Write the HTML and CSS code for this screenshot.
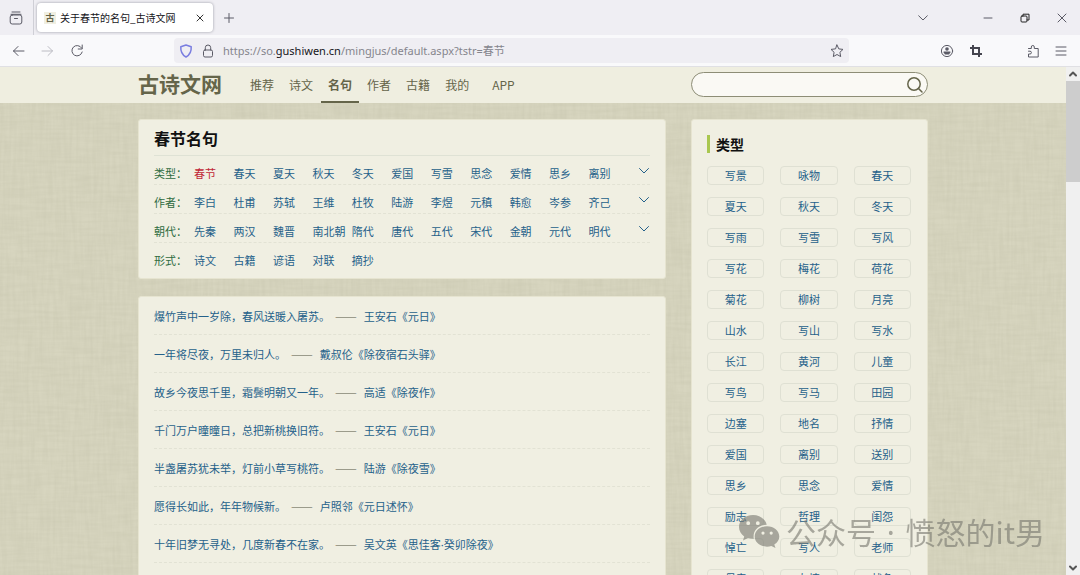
FILE: index.html
```html
<!DOCTYPE html>
<html lang="zh-CN">
<head>
<meta charset="utf-8">
<title>关于春节的名句_古诗文网</title>
<link rel="stylesheet" href="styles.css">
</head>
<body>
<div class="tabbar">
  <button class="icon-btn view-btn" aria-label="标签页"><svg width="14" height="14" viewBox="0 0 14 14"><path d="M3 1h8M2 3.300h10"/><rect x="1.200" y="4" width="11.600" height="9" rx="2"/><path d="M5.500 7.500h3"/></svg></button>
  <div class="tab">
    <span class="favicon">古</span>
    <span class="tab-title">关于春节的名句_古诗文网</span>
    <button class="icon-btn" aria-label="关闭标签页"><svg width="8" height="8" viewBox="0 0 8 8"><path d="M1 1l6 6M7 1l-6 6"/></svg></button>
  </div>
  <button class="icon-btn new-tab" aria-label="新建标签页"><svg width="10" height="10" viewBox="0 0 10 10"><path d="M5 .5v9M.5 5h9"/></svg></button>
  <div class="window-controls">
    <button class="icon-btn list-tabs" aria-label="列出标签页"><svg width="10" height="6" viewBox="0 0 10 6"><path d="M.7 .8L5 5 9.300 .8"/></svg></button>
    <button class="icon-btn" aria-label="最小化"><svg width="10" height="10" viewBox="0 0 10 10"><path d="M1 5h8"/></svg></button>
    <button class="icon-btn dark" aria-label="还原"><svg width="10" height="10" viewBox="0 0 10 10"><rect x="1" y="3" width="6" height="6" rx="1"/><path d="M3 3V1.200h6V7H7"/></svg></button>
    <button class="icon-btn" aria-label="关闭"><svg width="10" height="10" viewBox="0 0 10 10"><path d="M1 1l8 8M9 1L1 9"/></svg></button>
  </div>
</div>
<div class="toolbar">
  <button class="icon-btn" aria-label="后退"><svg width="13" height="12" viewBox="0 0 13 12"><path d="M6 1.500L1.500 6 6 10.500M1.500 6H12"/></svg></button>
  <button class="icon-btn faded" aria-label="前进"><svg width="13" height="12" viewBox="0 0 13 12"><path d="M7 1.500L11.500 6 7 10.500M11.500 6H1"/></svg></button>
  <button class="icon-btn" aria-label="刷新"><svg width="14" height="14" viewBox="0 0 14 14"><path d="M11.600 4A5.200 5.200 0 1 0 12.200 8M12.200 1v4H8.200"/></svg></button>
  <div class="address">
    <svg class="shield" width="14" height="14" viewBox="0 0 14 14"><path d="M7 1l5.200 1.800c.3 4.700-1 8-5.200 10.200C2.800 10.800 1.500 7.500 1.800 2.800z"/></svg>
    <svg class="lock" width="12" height="14" viewBox="0 0 12 14"><rect x="1.500" y="6" width="9" height="7" rx="1.500"/><path d="M3.300 6V3.700a2.700 2.700 0 0 1 5.400 0V6"/></svg>
    <span class="url">https://so.<b>gushiwen.cn</b>/mingjus/default.aspx?tstr=春节</span>
    <button class="icon-btn" aria-label="添加书签"><svg width="14" height="14" viewBox="0 0 14 14"><path d="M7 1l1.800 3.900 4.200.5-3.100 2.900.8 4.300L7 10.500l-3.700 2.100.8-4.300L1 5.400l4.200-.5z"/></svg></button>
  </div>
  <div class="tools">
    <button class="icon-btn" aria-label="账户"><svg width="14" height="14" viewBox="0 0 14 14"><circle cx="7" cy="7" r="5.600"/><circle class="solid" cx="7" cy="5" r="1.800"/><path class="solid" d="M3.600 7.600h6.800v1L9 10.400H5L3.600 8.600z"/></svg></button>
    <button class="icon-btn crop" aria-label="截图"><svg width="14" height="14" viewBox="0 0 14 14"><path d="M4 1v9h9M1 4h9v9"/></svg></button>
    <button class="icon-btn ext" aria-label="扩展"><svg width="14" height="14" viewBox="0 0 14 14"><path d="M2.500 4.500h2.800V3a1.500 1.500 0 0 1 3 0v1.500h3.900v8.500H2.500V10H4a1.300 1.300 0 0 0 0-2.800H2.500"/></svg></button>
    <button class="icon-btn" aria-label="菜单"><svg width="12" height="12" viewBox="0 0 12 12"><path d="M1 2h10M1 6h10M1 10h10"/></svg></button>
  </div>
</div>
<div class="viewport">
  <div class="page">
    <svg class="linen" aria-hidden="true">
      <filter id="warp" x="0" y="0" width="100%" height="100%"><feTurbulence type="fractalNoise" baseFrequency=".3 .03" numOctaves="2" seed="3"/><feColorMatrix values="0 0 0 0 .52  0 0 0 0 .51  0 0 0 0 .38  .4 0 0 0 -.12"/></filter>
      <filter id="weft" x="0" y="0" width="100%" height="100%"><feTurbulence type="fractalNoise" baseFrequency=".03 .3" numOctaves="2" seed="8"/><feColorMatrix values="0 0 0 0 .52  0 0 0 0 .51  0 0 0 0 .38  .4 0 0 0 -.12"/></filter>
      <rect width="100%" height="100%" filter="url(#warp)"/><rect width="100%" height="100%" filter="url(#weft)"/>
    </svg>
    <header class="site-header">
      <div class="container header-row">
        <a class="logo" href="#">古诗文网</a>
        <nav class="nav">
          <a href="#">推荐</a><a href="#">诗文</a><a class="current" href="#">名句</a><a href="#">作者</a><a href="#">古籍</a><a href="#">我的</a><a class="app" href="#">APP</a>
        </nav>
        <form class="search">
          <input type="text" aria-label="搜索">
          <button type="button" aria-label="搜索"><svg width="18" height="18" viewBox="0 0 18 18"><circle cx="8" cy="8" r="6.200"/><path d="M12.500 12.500L16 16"/></svg></button>
        </form>
      </div>
    </header>
    <div class="container columns">
      <main class="main">
        <section class="card filters">
          <h1>春节名句</h1>
          <div class="filter"><span class="label">类型：</span><a class="on" href="#">春节</a><a href="#">春天</a><a href="#">夏天</a><a href="#">秋天</a><a href="#">冬天</a><a href="#">爱国</a><a href="#">写雪</a><a href="#">思念</a><a href="#">爱情</a><a href="#">思乡</a><a href="#">离别</a><button aria-label="展开类型"><svg width="12" height="8" viewBox="0 0 12 8"><path d="M1.500 1.500L6 6l4.500-4.500"/></svg></button></div>
          <div class="filter"><span class="label">作者：</span><a href="#">李白</a><a href="#">杜甫</a><a href="#">苏轼</a><a href="#">王维</a><a href="#">杜牧</a><a href="#">陆游</a><a href="#">李煜</a><a href="#">元稹</a><a href="#">韩愈</a><a href="#">岑参</a><a href="#">齐己</a><button aria-label="展开作者"><svg width="12" height="8" viewBox="0 0 12 8"><path d="M1.500 1.500L6 6l4.500-4.500"/></svg></button></div>
          <div class="filter"><span class="label">朝代：</span><a href="#">先秦</a><a href="#">两汉</a><a href="#">魏晋</a><a href="#">南北朝</a><a href="#">隋代</a><a href="#">唐代</a><a href="#">五代</a><a href="#">宋代</a><a href="#">金朝</a><a href="#">元代</a><a href="#">明代</a><button aria-label="展开朝代"><svg width="12" height="8" viewBox="0 0 12 8"><path d="M1.500 1.500L6 6l4.500-4.500"/></svg></button></div>
          <div class="filter"><span class="label">形式：</span><a href="#">诗文</a><a href="#">古籍</a><a href="#">谚语</a><a href="#">对联</a><a href="#">摘抄</a></div>
        </section>
        <section class="card quotes">
          <p><a href="#">爆竹声中一岁除，春风送暖入屠苏。</a><span class="dash">——</span><a href="#">王安石《元日》</a></p>
          <p><a href="#">一年将尽夜，万里未归人。</a><span class="dash">——</span><a href="#">戴叔伦《除夜宿石头驿》</a></p>
          <p><a href="#">故乡今夜思千里，霜鬓明朝又一年。</a><span class="dash">——</span><a href="#">高适《除夜作》</a></p>
          <p><a href="#">千门万户曈曈日，总把新桃换旧符。</a><span class="dash">——</span><a href="#">王安石《元日》</a></p>
          <p><a href="#">半盏屠苏犹未举，灯前小草写桃符。</a><span class="dash">——</span><a href="#">陆游《除夜雪》</a></p>
          <p><a href="#">愿得长如此，年年物候新。</a><span class="dash">——</span><a href="#">卢照邻《元日述怀》</a></p>
          <p><a href="#">十年旧梦无寻处，几度新春不在家。</a><span class="dash">——</span><a href="#">吴文英《思佳客<span class="dot">·</span>癸卯除夜》</a></p>
          <p></p>
        </section>
      </main>
      <aside class="card sidebar">
        <h2>类型</h2>
        <div class="tags">
          <a href="#">写景</a><a href="#">咏物</a><a href="#">春天</a>
          <a href="#">夏天</a><a href="#">秋天</a><a href="#">冬天</a>
          <a href="#">写雨</a><a href="#">写雪</a><a href="#">写风</a>
          <a href="#">写花</a><a href="#">梅花</a><a href="#">荷花</a>
          <a href="#">菊花</a><a href="#">柳树</a><a href="#">月亮</a>
          <a href="#">山水</a><a href="#">写山</a><a href="#">写水</a>
          <a href="#">长江</a><a href="#">黄河</a><a href="#">儿童</a>
          <a href="#">写鸟</a><a href="#">写马</a><a href="#">田园</a>
          <a href="#">边塞</a><a href="#">地名</a><a href="#">抒情</a>
          <a href="#">爱国</a><a href="#">离别</a><a href="#">送别</a>
          <a href="#">思乡</a><a href="#">思念</a><a href="#">爱情</a>
          <a href="#">励志</a><a href="#">哲理</a><a href="#">闺怨</a>
          <a href="#">悼亡</a><a href="#">写人</a><a href="#">老师</a>
          <a href="#">母亲</a><a href="#">友情</a><a href="#">战争</a>
        </div>
      </aside>
    </div>
  </div>
  <div class="scrollbar">
    <svg width="8" height="6" viewBox="0 0 8 6"><path d="M1 4.500l3-3 3 3"/></svg>
    <div class="thumb"></div>
    <svg width="8" height="6" viewBox="0 0 8 6"><path d="M1 1.500l3 3 3-3"/></svg>
  </div>
  <div class="watermark">
    <svg width="42" height="34" viewBox="0 0 42 34"><path fill-rule="evenodd" d="M15 1C7 1 1 6.200 1 13c0 3.900 2 7.200 5.200 9.400L5 26.500l5-2.600c1.800.6 3.800.9 5.800.8C14.400 17 20 11 28.700 10.700 27.300 5 21.700 1 15 1zM10.200 7.300a1.900 1.900 0 1 1 0 3.800 1.900 1.900 0 0 1 0-3.800zm9.600 0a1.900 1.900 0 1 1 0 3.800 1.900 1.900 0 0 1 0-3.800z"/><path fill-rule="evenodd" d="M29 12.300c-7 0-12.300 4.500-12.300 10.200S22 32.700 29 32.700c1.500 0 3-.2 4.300-.7l4.200 2-1.200-3.400c3-1.900 5-4.800 5-8.100 0-5.700-5.300-10.200-12.300-10.200zM25 17.500a1.600 1.600 0 1 1 0 3.200 1.600 1.600 0 0 1 0-3.200zm8.200 0a1.600 1.600 0 1 1 0 3.200 1.600 1.600 0 0 1 0-3.200z"/></svg>
    <span>公众号 <span class="dot">·</span> 愤怒的it男</span>
  </div>
</div>
</body>
</html>
```
FILE: styles.css
```css
* { box-sizing: border-box; }
body {
  margin: 0;
  height: 100vh;
  display: flex;
  flex-direction: column;
  overflow: hidden;
  font: 11px/16px "Noto Sans CJK SC", "Noto Sans", sans-serif;
  color: #222;
}
a { color: #25618a; text-decoration: none; }
button { padding: 0; border: 0; background: none; color: inherit; }
svg { display: block; fill: none; stroke: currentColor; stroke-linecap: round; stroke-linejoin: round; }
.solid { fill: currentColor; stroke: none; }
.dot { font-family: "Noto Sans", sans-serif; line-height: 1; }

.tabbar { flex: none; height: 35px; display: flex; align-items: center; background: #efeef3; color: #5b5b66; }
.icon-btn { flex: none; display: flex; align-items: center; justify-content: center; }
.view-btn { width: 34px; height: 100%; padding-right: 2px; border-right: 1px solid #cfcfd6; }
.tab { width: 176px; height: 29px; margin-left: 3px; padding: 0 9px 0 7px; display: flex; align-items: center; gap: 4px; border-radius: 4px; background: #fff; box-shadow: 0 0 3px #9a9aa4; color: #333; }
.favicon { width: 12px; height: 12px; font: 700 9px/12px "Noto Sans CJK SC", sans-serif; text-align: center; background: #f0efe2; color: #65654a; }
.tab-title { flex: 1; font-size: 10px; color: #15141a; white-space: nowrap; }
.new-tab { margin-left: 11px; }
.window-controls { margin-left: auto; padding-right: 13px; display: flex; align-items: center; gap: 27px; }
.list-tabs { margin-right: 28px; }
.dark { color: #222; }

.toolbar { flex: none; height: 32px; padding: 0 13px 0 12px; display: flex; align-items: center; gap: 16px; background: #f9f9fb; border-bottom: 1px solid #e0e0e4; color: #5b5b66; }
.faded { color: #bcbcc3; }
.address { flex: 1; height: 25px; margin-left: 74px; padding: 0 5px; display: flex; align-items: center; gap: 9px; border-radius: 4px; background: #efeef3; }
.shield { color: #7a7ee0; stroke-width: 1.500; }
.url { flex: 1; font: 11px/16px "Noto Sans", "Noto Sans CJK SC", sans-serif; color: #85858d; white-space: nowrap; }
.url b { font-weight: 400; color: #15141a; }
.tools { margin-left: 75px; display: flex; gap: 15px; }
.crop { color: #45454f; }
.crop svg { stroke-width: 2; stroke-linecap: butt; stroke-linejoin: miter; }
.ext { margin-left: 28px; }

.viewport { flex: 1; min-height: 0; display: flex; position: relative; }
.page { flex: 1; min-width: 0; overflow: hidden; position: relative; background: #d7d5bf; }
.linen { position: absolute; inset: 0; width: 100%; height: 100%; }
.container { width: 74.1%; max-width: 1000px; margin: 0 auto; }
.site-header { position: relative; height: 36px; background: #efeee0; }
.header-row { height: 100%; display: flex; align-items: center; }
.logo { padding-bottom: 4px; font-size: 21px; line-height: 32px; font-weight: 700; color: #65654a; }
.nav { align-self: stretch; margin-left: 21px; display: flex; gap: 1px; font-size: 12px; line-height: 35px; }
.nav a { padding: 0 7px; color: #65654a; }
.nav .current { font-weight: 700; border-bottom: 2px solid #65654a; }
.nav .app { margin-left: 8px; }
.search { width: 30%; height: 25px; margin-left: auto; margin-bottom: 1px; padding: 0 3px 0 12px; display: flex; align-items: center; border: 1px solid #8d8d76; border-radius: 13px; background: #faf9f4; color: #65654a; }
.search input { flex: 1; min-width: 0; border: 0; outline: 0; background: none; }
.search svg { stroke-width: 1.500; }

.columns { position: relative; padding-top: 16px; display: grid; grid-template-columns: minmax(0, 1fr) 30%; gap: 25px; align-items: start; }
.card { border-radius: 3px; border: 1px solid #e6e4d0; background: #f0efe2; }
.filters { padding: 3px 15px 6px; }
.filters h1 { margin: 0; padding-bottom: 2px; font-size: 16px; line-height: 30px; border-bottom: 1px solid #dfe2d5; color: #111; }
.filter { height: 29px; padding-top: 5px; display: grid; grid-template-columns: 40px repeat(11, minmax(0, 1fr)) 22px; align-items: center; border-bottom: 1px dashed #e2e2d4; white-space: nowrap; }
.filter:last-child { border-bottom: 0; }
.label { color: #2e6b3f; }
.filter .on { color: #c01f35; }
.filter button { justify-self: end; padding-bottom: 4px; color: #25618a; }
.quotes { margin-top: 17px; padding: 0 15px; }
.quotes p { height: 38px; margin: 0; display: flex; align-items: center; border-bottom: 1px dashed #e2e2d4; white-space: nowrap; }
.dash { margin: 0 7px 0 5px; font-size: 13px; color: #888878; }
.sidebar { padding: 15px 16px 15px 15px; }
.sidebar h2 { margin: 0 0 13px; padding-left: 6px; font-size: 14px; line-height: 18px; border-left: 3px solid #a9c74f; color: #111; }
.tags { display: grid; grid-template-columns: repeat(3, minmax(0, 1fr)); gap: 12px 16px; }
.tags a { height: 19px; line-height: 17px; text-align: center; border: 1px solid #dfe0d3; border-radius: 4px; }

.scrollbar { flex: none; width: 14px; padding: 4px 0; display: flex; flex-direction: column; align-items: center; background: #f0f0f0; color: #555; }
.scrollbar svg { flex: none; stroke-width: 2; }
.thumb { width: 100%; height: 101px; margin: 4px 0 auto; background: #cdcdcd; }
.watermark { position: absolute; right: 35px; bottom: 22px; display: flex; align-items: center; gap: 6px; color: #77776e; opacity: .6; font-size: 30px; line-height: 44px; white-space: nowrap; }
.watermark .dot { margin: 0 4px; }
.watermark svg { fill: currentColor; stroke: none; }
```
